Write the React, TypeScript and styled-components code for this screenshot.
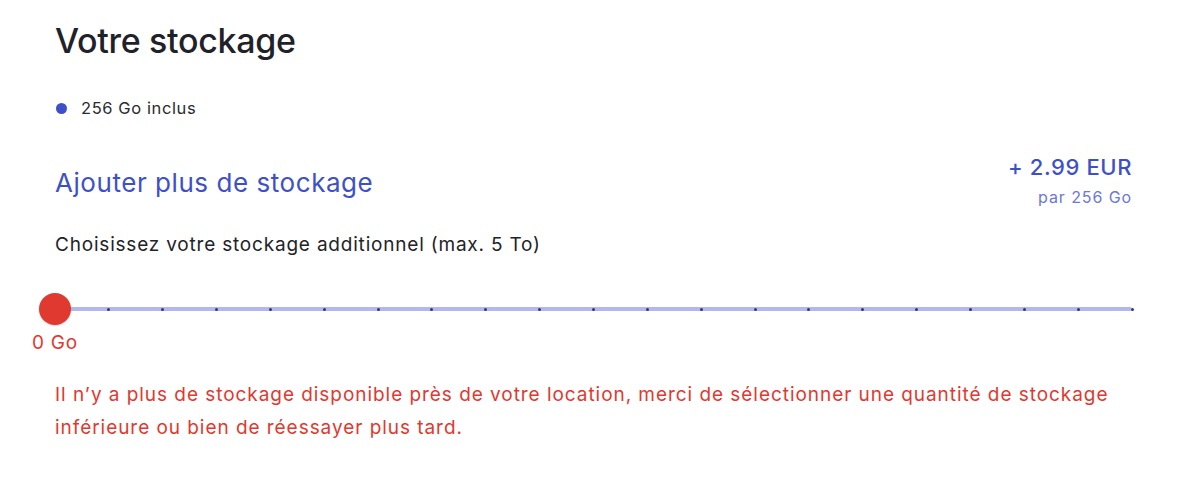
import React from 'react';
import styled, { createGlobalStyle } from 'styled-components';

const GlobalStyle = createGlobalStyle`
  html, body {
    margin: 0;
    padding: 0;
    background: #ffffff;
  }
  body {
    font-family: 'Inter', 'Noto Sans', sans-serif;
    color: #1f2024;
  }
`;

const BLUE = '#3e50c9';
const RED = '#e0392f';
const TICKS = 20;

const Panel = styled.section`
  width: 1077px;
  padding: 18px 0 0 55px;
`;

const Title = styled.h1`
  margin: 0;
  font-size: 34px;
  font-weight: 500;
  line-height: 46px;
  color: #1f2228;
  letter-spacing: -0.3px;
`;

const Included = styled.div`
  display: flex;
  align-items: center;
  gap: 14px;
  margin-top: 33px;
  font-size: 16.5px;
  line-height: 22px;
  letter-spacing: 0.6px;
  color: #2a2b30;
`;

const Dot = styled.span`
  width: 11px;
  height: 11px;
  border-radius: 50%;
  background: ${BLUE};
  margin-left: 1px;
`;

const AddRow = styled.div`
  display: flex;
  justify-content: space-between;
  align-items: flex-start;
  margin-top: 34px;
`;

const AddTitle = styled.h2`
  margin: 14px 0 0;
  font-size: 26px;
  font-weight: 400;
  line-height: 32px;
  letter-spacing: 0.55px;
  color: ${BLUE};
`;

const Price = styled.div`
  display: flex;
  flex-direction: column;
  align-items: flex-end;
`;

const Amount = styled.span`
  font-size: 22px;
  line-height: 28px;
  font-weight: 500;
  letter-spacing: 0.6px;
  color: ${BLUE};
`;

const Per = styled.span`
  font-size: 16px;
  line-height: 20px;
  margin-top: 6px;
  letter-spacing: 0.9px;
  color: #6a78d8;
`;

const Hint = styled.p`
  margin: 26px 0 0;
  font-size: 19px;
  line-height: 24px;
  letter-spacing: 0.8px;
  color: #222328;
`;

const SliderWrap = styled.div`
  position: relative;
  margin-top: 44px;
  height: 16px;
`;

const Track = styled.div`
  position: absolute;
  left: 0;
  right: 0;
  top: 6px;
  height: 4px;
  background: #b2b8ee;
  border-radius: 2px;
`;

const Tick = styled.span`
  position: absolute;
  top: 6.5px;
  width: 3px;
  height: 3px;
  margin-left: -1.5px;
  border-radius: 50%;
  background: #2f3580;
`;

const Thumb = styled.span`
  position: absolute;
  left: -16px;
  top: -8px;
  width: 32px;
  height: 32px;
  border-radius: 50%;
  background: ${RED};
  box-shadow: 0 1px 2px rgba(0, 0, 0, 0.15);
`;

const ValueLabel = styled.div`
  width: 70px;
  margin: 15px 0 0 -35px;
  text-align: center;
  font-size: 19px;
  line-height: 22px;
  letter-spacing: 0.8px;
  color: ${RED};
`;

const Error = styled.p`
  margin: 24px 0 0;
  width: 1120px;
  font-size: 19px;
  line-height: 33px;
  letter-spacing: 0.95px;
  color: ${RED};
`;

export default function App() {
  return (
    <>
      <GlobalStyle />
      <Panel>
        <Title>Votre stockage</Title>
        <Included>
          <Dot />
          256 Go inclus
        </Included>
        <AddRow>
          <AddTitle>Ajouter plus de stockage</AddTitle>
          <Price>
            <Amount>+ 2.99 EUR</Amount>
            <Per>par 256 Go</Per>
          </Price>
        </AddRow>
        <Hint>Choisissez votre stockage additionnel (max. 5 To)</Hint>
        <SliderWrap>
          <Track />
          {Array.from({ length: TICKS }, (_, i) => (
            <Tick key={i} style={{ left: `${((i + 1) / TICKS) * 100}%` }} />
          ))}
          <Thumb />
        </SliderWrap>
        <ValueLabel>0 Go</ValueLabel>
        <Error>
          Il n’y a plus de stockage disponible près de votre location, merci de sélectionner une
          quantité de stockage inférieure ou bien de réessayer plus tard.
        </Error>
      </Panel>
    </>
  );
}
